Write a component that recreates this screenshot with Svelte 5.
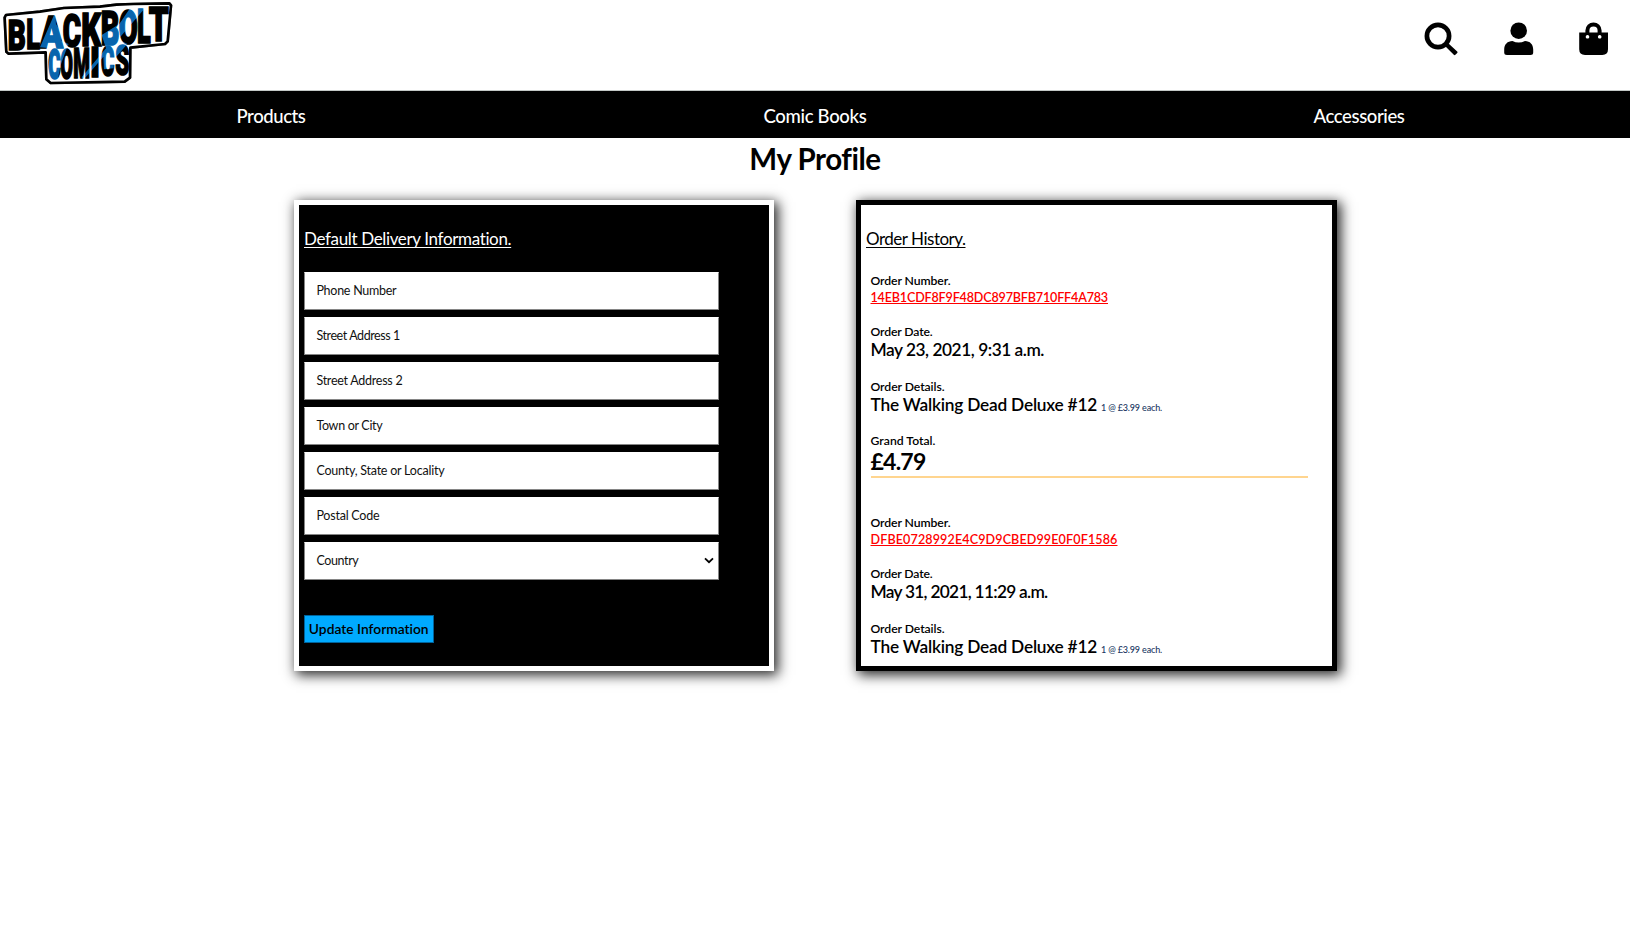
<script>
  const nav = [['Products', 69], ['Comic Books', 103], ['Accessories', 91]];
  const fields = [
    ['Phone Number', 80], ['Street Address 1', 83.5], ['Street Address 2', 86],
    ['Town or City', 66], ['County, State or Locality', 128], ['Postal Code', 63], ['Country', 42]
  ];
  const orders = [
    { number: '14EB1CDF8F9F48DC897BFB710FF4A783', nw: 237.5, date: 'May 23, 2021, 9:31 a.m.', dw: 173.5, total: '£4.79' },
    { number: 'DFBE0728992E4C9D9CBED99E0F0F1586', nw: 247, date: 'May 31, 2021, 11:29 a.m.', dw: 177 }
  ];
  // glyph, left, width, baseline, font size
  const letters = [
    ['B', 23, 54, 149, 127], ['L', 79, 41, 146, 129], ['A', 119, 70, 143, 134], ['C', 188, 55, 140, 136],
    ['K', 244, 59, 137, 139], ['B', 302, 56, 134, 143], ['O', 356, 57, 132, 147], ['L', 411, 41, 128, 147], ['T', 446, 60, 124, 147],
    ['C', 145, 37, 237, 130], ['O', 181, 38, 236, 130], ['M', 220, 50, 235, 128], ['I', 270, 30, 232, 128],
    ['C', 303, 40, 229, 128], ['S', 346, 42, 226, 126]
  ];

  // Spreads the tracking of a label so that it fills the given measure.
  function fit(node, width) {
    const apply = () => {
      node.style.letterSpacing = '0px';
      const gap = (width - node.getBoundingClientRect().width) / node.textContent.length;
      node.style.letterSpacing = gap + 'px';
    };
    apply();
    document.fonts.ready.then(apply);
  }
</script>

<header>
  <svg class="logo" viewBox="0 0 540 270" aria-label="Blackbolt Comics">
    <defs>
      <pattern id="ink" patternUnits="userSpaceOnUse" width="540" height="270">
        <rect width="540" height="270" fill="#000" />
        <g fill="#0864ad">
          <path d="M165 38 120 142 152 145 140 245 172 245 182 195 205 132 184 122 182 95 168 72Z" />
          <path d="M392 22 437 22 355 118 382 132 345 175 340 205 312 208 310 170 250 240 245 232 318 145 305 105 358 72Z" />
        </g>
      </pattern>
    </defs>
    <path class="plate" d="M18 45 120 35 192 24 300 20 350 14 400 12 508 10 513 16 503 124 495 132 391 143 390 233 374 245 152 249 139 238 137 157 26 161 19 155 14 53Z" />
    {#each letters as [c, x, w, y, s]}
      <text class="letter" {x} {y} font-size={s} textLength={w} lengthAdjust="spacingAndGlyphs">{c}</text>
    {/each}
  </svg>
  <div class="actions">
    <svg viewBox="0 0 34 34"><circle cx="14" cy="14" r="11.1" fill="none" stroke="#000" stroke-width="4.7" /><path d="M21.5 24.5 24.5 21.5 33.2 29.5Q34 30.2 33.2 31L31.4 32.8Q30.6 33.5 29.8 32.7Z" /></svg>
    <svg viewBox="0 0 34 34"><circle cx="16.7" cy="8.7" r="8.3" /><path d="M10.4 19Q16.7 22 23 19C28 19 31.2 22.5 31.2 27.5V30.5Q31.2 33 28.5 33H5Q2.2 33 2.2 30.5V27.5C2.2 22.5 5.5 19 10.4 19Z" /></svg>
    <svg viewBox="0 0 34 34"><path fill-rule="evenodd" d="M2.2 10.5H8.4V8.5a8.1 8.1 0 0 1 16.2 0V10.5H31V27.3Q31 33 25.3 33H8Q2.2 33 2.2 27.3ZM12.4 10.5H20.6V8.5a4.1 4.1 0 0 0-8.2 0ZM10.5 13a1.8 1.8 0 1 0 .01 0ZM22.7 13a1.8 1.8 0 1 0 .01 0Z" /></svg>
  </div>
</header>
<nav>
  {#each nav as [label, w]}<a href="#top"><span use:fit={w}>{label}</span></a>{/each}
</nav>
<h1><span use:fit={131}>My Profile</span></h1>
<main>
  <section class="delivery">
    <h2><span use:fit={207.5}>Default Delivery Information.</span></h2>
    <form>
      {#each fields as [label, w], i}
        <div class="field">
          <span use:fit={w}>{label}</span>
          {#if i === fields.length - 1}<svg viewBox="0 0 10 7"><path d="M1 1.3 5 5.2 9 1.3" fill="none" stroke="#000" stroke-width="1.8" /></svg>{/if}
        </div>
      {/each}
      <button type="button"><span use:fit={120}>Update Information</span></button>
    </form>
  </section>
  <section class="history">
    <h2><span use:fit={99.5}>Order History.</span></h2>
    <div class="orders">
      {#each orders as o}
        <article>
          <div class="label"><span use:fit={80}>Order Number.</span></div>
          <div class="number"><a href="#top" use:fit={o.nw}>{o.number}</a></div>
          <div class="label"><span use:fit={62}>Order Date.</span></div>
          <div class="value"><span use:fit={o.dw}>{o.date}</span></div>
          <div class="label"><span use:fit={74}>Order Details.</span></div>
          <div class="value item"><span use:fit={226.5}>The Walking Dead Deluxe #12</span><small><span use:fit={61}>1 @ £3.99 each.</span></small></div>
          {#if o.total}
            <div class="label"><span use:fit={65}>Grand Total.</span></div>
            <div class="total"><span use:fit={55}>{o.total}</span></div>
          {/if}
        </article>
      {/each}
    </div>
  </section>
</main>

<style>
  :global(body) { background: #fff; color: #000; font-family: Lato, "Open Sans", sans-serif; }
  span, .number a { white-space: nowrap; display: inline-block; }
  header { height: 90px; border-bottom: 1px solid #c3c8c6; display: flex; justify-content: space-between; }
  .logo { width: 180px; height: 90px; font-family: "Roboto", sans-serif; font-weight: 900; }
  .plate { fill: #fff; stroke: #000; stroke-width: 8; stroke-linejoin: round; filter: drop-shadow(0 0 1px #777); }
  .letter { fill: url(#ink); stroke: url(#ink); stroke-width: 5; }
  .actions { display: flex; padding: 22px 19px 0 0; gap: 41.5px; }
  .actions svg { width: 34px; height: 34px; }
  .actions svg:first-child { margin-right: 2.5px; }
  nav { height: 47px; background: #000; display: grid; grid-template-columns: 542px 1fr 542px; }
  nav a { color: #fff; text-decoration: none; font-size: 18.5px; font-weight: 500; line-height: 47px; padding-top: 2px; height: 45px; text-align: center; }
  h1 { margin: 0; height: 62px; line-height: 41px; font-size: 29.5px; font-weight: 700; text-align: center; }
  main { display: flex; padding: 0 0 40px 294px; gap: 82px; }
  section { width: 480px; height: 471px; box-sizing: border-box; border: 5px solid; padding: 24px 5px 0; overflow: hidden; box-shadow: 3px 3px 12px 1px rgba(0, 0, 0, .85); }
  .delivery { background: #000; border-color: #fff; color: #fff; }
  .history { width: 481px; background: #fff; border-color: #000; }
  h2 { margin: 0 0 23px; font-size: 17px; line-height: 20px; font-weight: 400; }
  h2 span { text-decoration: underline; text-decoration-thickness: 1px; text-underline-offset: 2px; text-decoration-skip-ink: none; }
  form { display: flex; flex-direction: column; align-items: flex-start; gap: 7px; }
  .field { width: 414.5px; height: 38px; box-sizing: border-box; border: 1px solid #858585; border-top-color: #fff; background: #fff; color: #111; padding: 0 4px 1px 11.4px; display: flex; align-items: center; justify-content: space-between; font-size: 12.5px; }
  .field svg { width: 10px; height: 7px; }
  button { margin-top: 28px; width: 129.5px; height: 28px; padding: 0 0 2px; background: #00aaff; border: 1px solid #00639b; font: 600 13.8px Lato, sans-serif; color: #000; }
  .orders { padding-left: 4.5px; width: 437px; font-weight: 600; }
  article { margin-bottom: 36px; }
  .label { font-size: 12.2px; line-height: 17px; height: 17px; }
  .number { font-size: 12.6px; line-height: 18px; height: 17px; margin-bottom: 17px; }
  .number a { color: #ff0000; text-decoration: underline; text-decoration-thickness: 1px; text-underline-offset: 1px; }
  .value { font-size: 17.3px; line-height: 20px; height: 18px; margin-bottom: 20px; }
  .item { display: flex; align-items: baseline; gap: 4px; margin-bottom: 19px; }
  small { font-size: 9px; font-weight: 500; color: #17365f; }
  .total { font-size: 23px; line-height: 25px; height: 27px; font-weight: 700; border-bottom: 2px solid #ffd58f; }
</style>
